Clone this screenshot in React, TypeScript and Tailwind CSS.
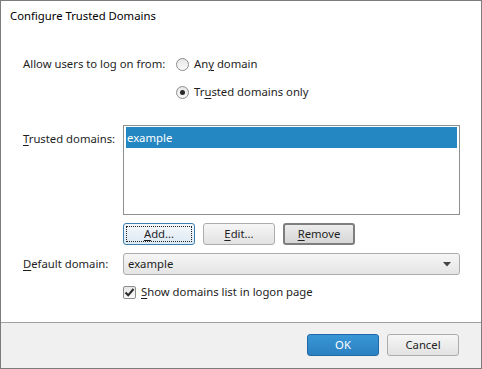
import React from "react";

const font = { fontFamily: '"Noto Sans", "Open Sans", sans-serif' };

function U({ children }: { children: React.ReactNode }) {
  return <span className="underline underline-offset-[2px] decoration-[1px]">{children}</span>;
}

function Btn({
  children,
  variant = "normal",
}: {
  children: React.ReactNode;
  variant?: "normal" | "focus" | "default" | "primary";
}) {
  const base =
    "w-[72px] h-[22px] rounded-[3px] flex items-center justify-center text-[11.3px] leading-[16px] relative";
  if (variant === "primary")
    return (
      <div className={`${base} border border-[#1f6aa6] bg-gradient-to-b from-[#3a96d6] to-[#2b80c2] text-white`}>
        {children}
      </div>
    );
  if (variant === "focus")
    return (
      <div className={`${base} border border-[#3c7fb1] bg-gradient-to-b from-[#f4f8fb] to-[#dde9f3] text-[#1e1e1e]`}>
        <div className="absolute inset-[2px] border border-dotted border-[#222]" />
        {children}
      </div>
    );
  if (variant === "default")
    return (
      <div className={`${base} border-2 border-[#7e7e7e] bg-gradient-to-b from-[#ececec] to-[#d6d6d6] text-[#1e1e1e]`}>
        {children}
      </div>
    );
  return (
    <div className={`${base} border border-[#acacac] bg-gradient-to-b from-[#f6f6f6] to-[#e2e2e2] text-[#1e1e1e]`}>
      {children}
    </div>
  );
}

function Radio({ checked }: { checked?: boolean }) {
  return (
    <div className="w-[13px] h-[13px] rounded-full border border-[#8c8c8c] bg-gradient-to-b from-[#e6e6e6] to-[#fafafa] flex items-center justify-center">
      {checked && <div className="w-[5px] h-[5px] rounded-full bg-[#2a2a2a]" />}
    </div>
  );
}

export default function App() {
  return (
    <div
      className="w-[482px] h-[369px] border border-[#7c7c7c] bg-white flex flex-col text-[#1e1e1e]"
      style={font}
    >
      <div className="mt-[7px] ml-[9px] h-[16px] leading-[16px] text-[11.3px] text-black">
        Configure Trusted Domains
      </div>

      <div className="pl-[22px] flex flex-col text-[11.3px] leading-[16px]">
        <div className="mt-[32px] flex h-[16px] items-center">
          <div className="w-[153px]">Allow users to log on from:</div>
          <div className="flex items-center gap-[5px]">
            <Radio />
            <span>
              An<U>y</U> domain
            </span>
          </div>
        </div>
        <div className="mt-[12px] flex h-[16px] items-center">
          <div className="w-[153px]" />
          <div className="flex items-center gap-[5px]">
            <Radio checked />
            <span>
              Tr<U>u</U>sted domains only
            </span>
          </div>
        </div>

        <div className="mt-[25px] flex">
          <div className="w-[100px] pt-[6px]">
            <U>T</U>rusted domains:
          </div>
          <div className="w-[337px] h-[90px] border border-[#8e8f8f] px-[2px] pt-[1px]">
            <div className="h-[21px] bg-[#2587c1] text-white leading-[21px] pl-[1px]">example</div>
          </div>
        </div>

        <div className="mt-[8px] flex">
          <div className="w-[100px]" />
          <div className="flex gap-[8px]">
            <Btn variant="focus">
              <span>
                <U>A</U>dd...
              </span>
            </Btn>
            <Btn>
              <span>
                <U>E</U>dit...
              </span>
            </Btn>
            <Btn variant="default">
              <span>
                <U>R</U>emove
              </span>
            </Btn>
          </div>
        </div>

        <div className="mt-[8px] flex items-center">
          <div className="w-[100px]">
            <U>D</U>efault domain:
          </div>
          <div className="w-[337px] h-[22px] border border-[#acacac] rounded-[3px] bg-gradient-to-b from-[#f6f6f6] to-[#e4e4e4] flex items-center justify-between pl-[4px] pr-[8px]">
            <span>example</span>
            <svg width="8" height="5" viewBox="0 0 8 5">
              <polygon points="0,0 8,0 4,4.5" fill="#444" />
            </svg>
          </div>
        </div>

        <div className="mt-[9px] flex items-center h-[16px]">
          <div className="w-[100px]" />
          <div className="flex items-center gap-[5px]">
            <div className="w-[13px] h-[13px] border border-[#8c8c8c] rounded-[2px] bg-gradient-to-b from-[#e6e6e6] to-[#fafafa] flex items-center justify-center">
              <svg width="11" height="11" viewBox="0 0 11 11">
                <path d="M1.5 5.5 L4.2 8.3 L9.5 2" stroke="#2a2a2a" strokeWidth="2" fill="none" />
              </svg>
            </div>
            <span>
              <U>S</U>how domains list in logon page
            </span>
          </div>
        </div>
      </div>

      <div className="mt-auto h-[46px] border-t border-[#a0a0a0] bg-[#f0f0f0] flex justify-end items-start pt-[11px] pr-[22px] gap-[8px]">
        <Btn variant="primary">OK</Btn>
        <Btn>Cancel</Btn>
      </div>
    </div>
  );
}
